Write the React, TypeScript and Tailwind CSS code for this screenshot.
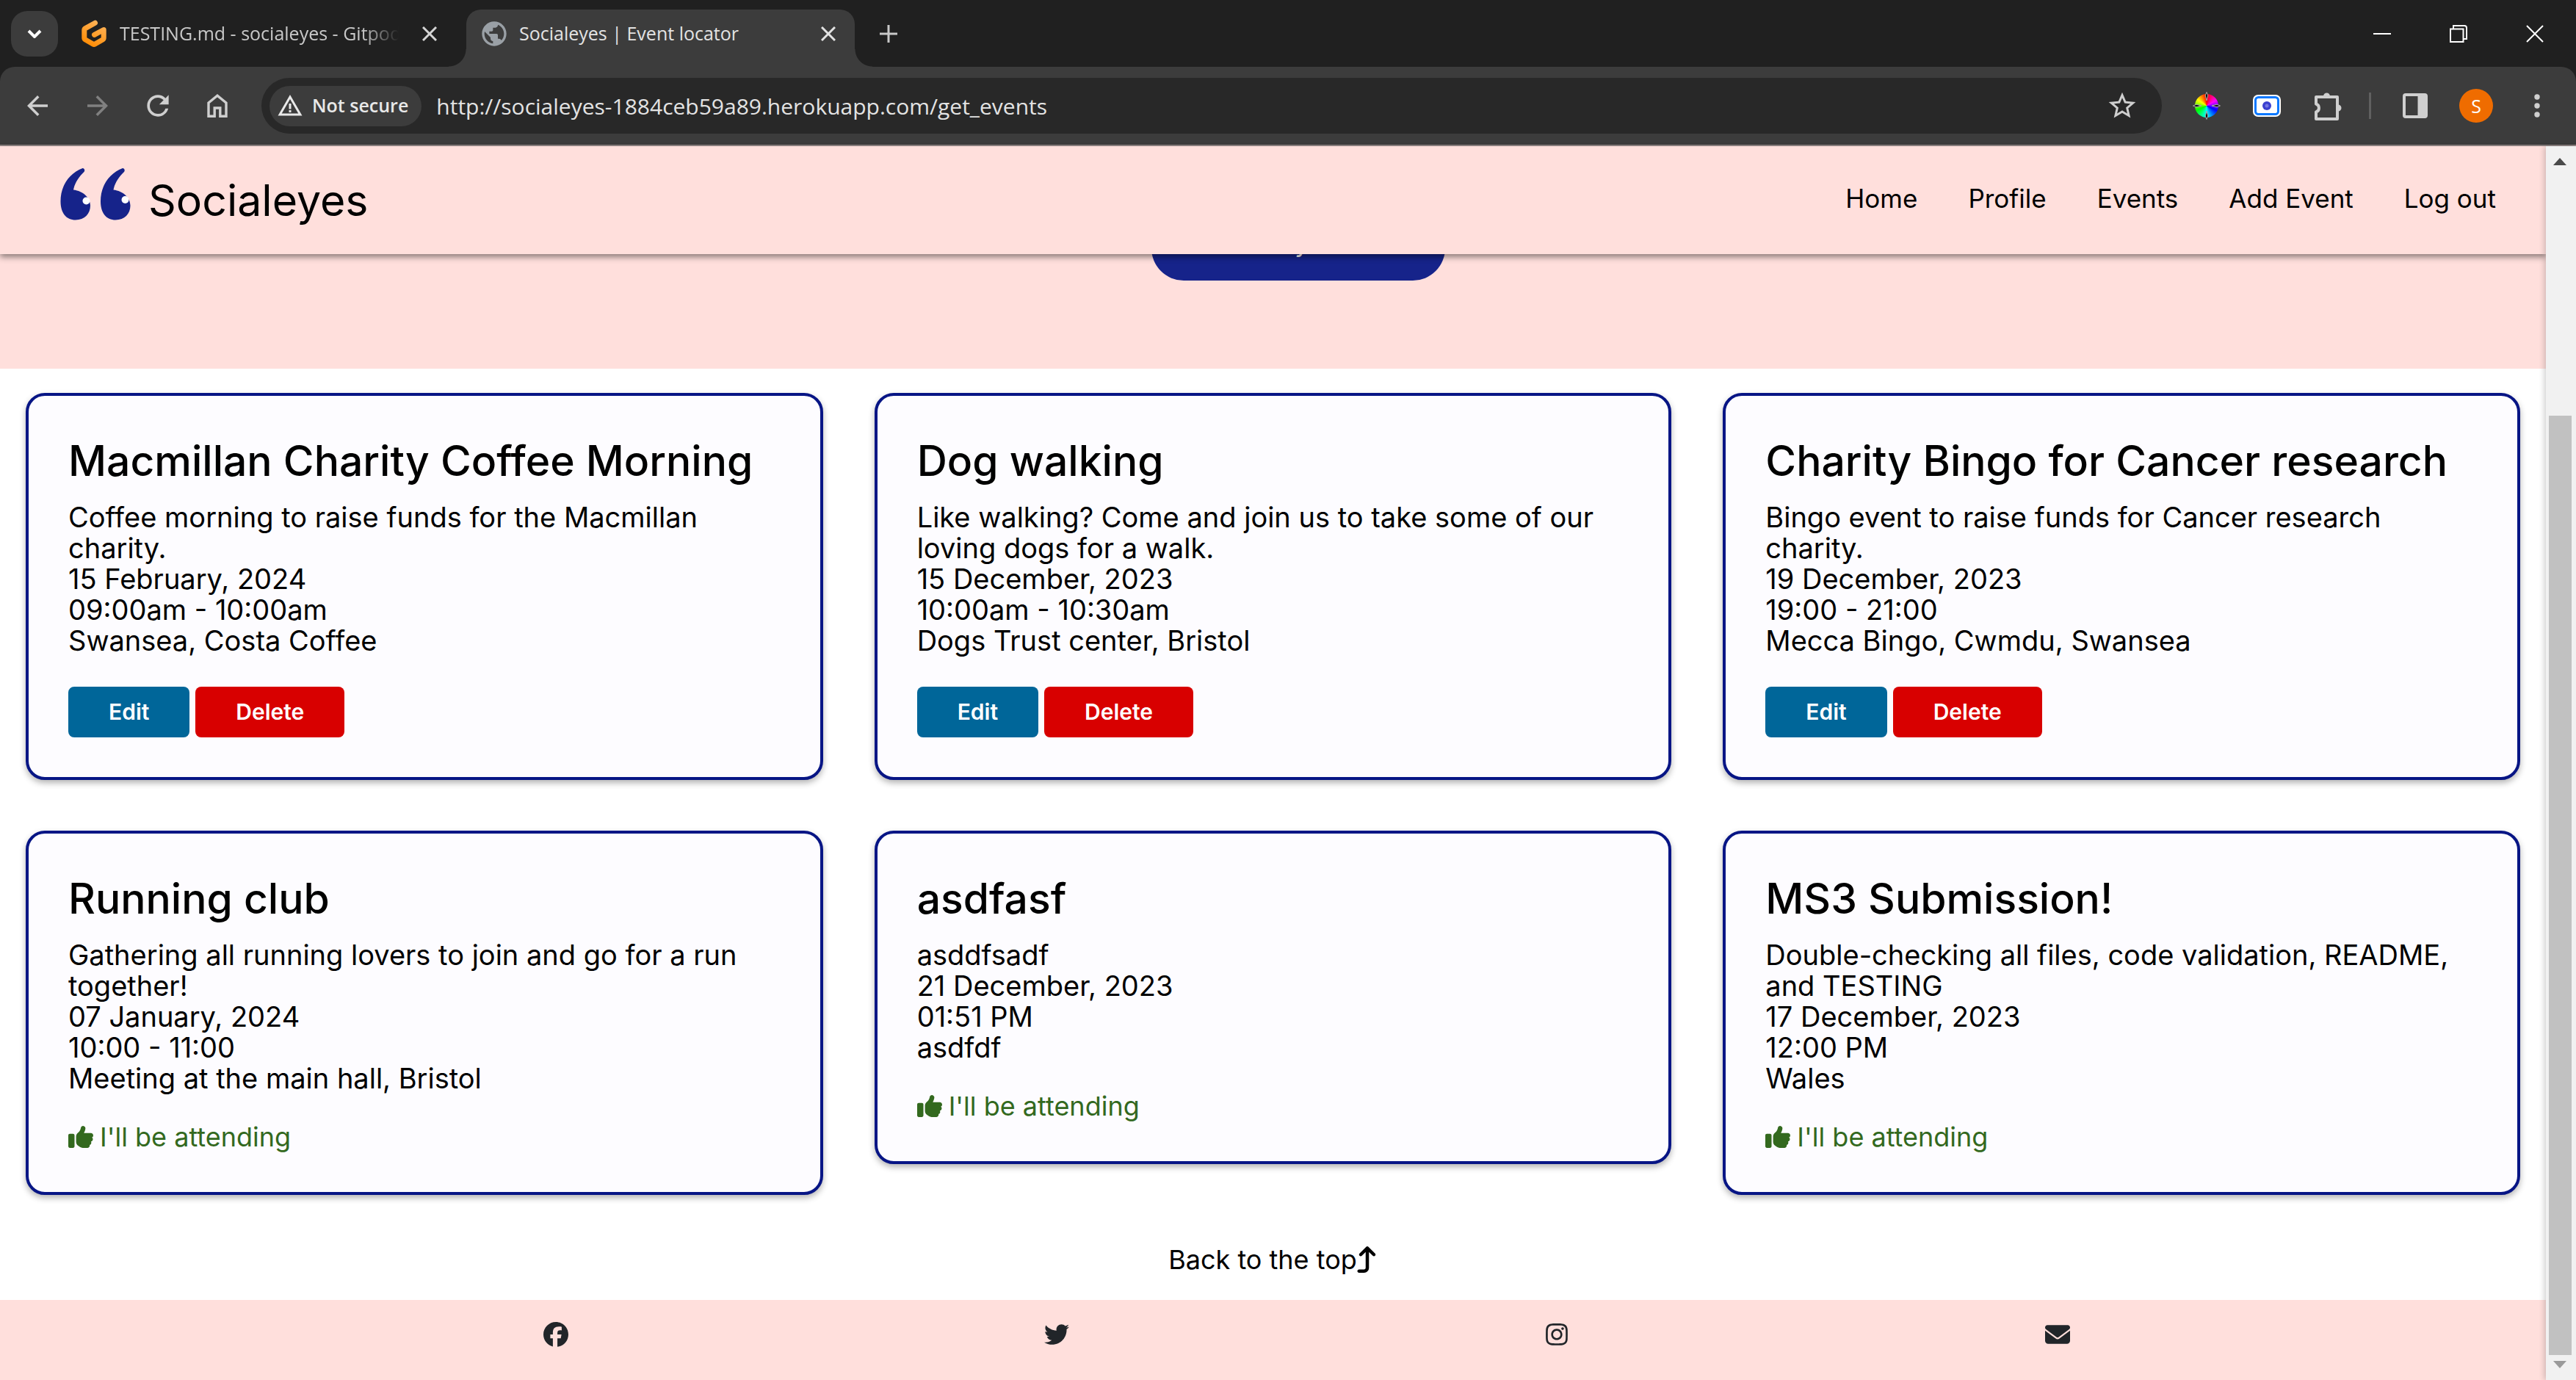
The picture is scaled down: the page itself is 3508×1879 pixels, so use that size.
import type { ReactNode } from "react";
import { FaArrowTurnUp, FaEnvelope, FaFacebook, FaInstagram, FaThumbsUp, FaTwitter } from "react-icons/fa6";
import { MdArrowBack, MdArrowForward, MdPublic, MdRefresh, MdStarBorder, MdWarningAmber } from "react-icons/md";

type EventItem = { title: string; description: string; date: string; time: string; place: string; own: boolean };

const events: EventItem[] = [
  {
    title: "Macmillan Charity Coffee Morning",
    description: "Coffee morning to raise funds for the Macmillan charity.",
    date: "15 February, 2024",
    time: "09:00am - 10:00am",
    place: "Swansea, Costa Coffee",
    own: true,
  },
  {
    title: "Dog walking",
    description: "Like walking? Come and join us to take some of our loving dogs for a walk.",
    date: "15 December, 2023",
    time: "10:00am - 10:30am",
    place: "Dogs Trust center, Bristol",
    own: true,
  },
  {
    title: "Charity Bingo for Cancer research",
    description: "Bingo event to raise funds for Cancer research charity.",
    date: "19 December, 2023",
    time: "19:00 - 21:00",
    place: "Mecca Bingo, Cwmdu, Swansea",
    own: true,
  },
  {
    title: "Running club",
    description: "Gathering all running lovers to join and go for a run together!",
    date: "07 January, 2024",
    time: "10:00 - 11:00",
    place: "Meeting at the main hall, Bristol",
    own: false,
  },
  {
    title: "asdfasf",
    description: "asddfsadf",
    date: "21 December, 2023",
    time: "01:51 PM",
    place: "asdfdf",
    own: false,
  },
  {
    title: "MS3 Submission!",
    description: "Double-checking all files, code validation, README, and TESTING",
    date: "17 December, 2023",
    time: "12:00 PM",
    place: "Wales",
    own: false,
  },
];

const navLinks = ["Home", "Profile", "Events", "Add Event", "Log out"];

function CloseIcon() {
  return (
    <svg className="size-5" viewBox="0 0 20 20" stroke="currentColor" strokeWidth="3" fill="none">
      <path d="M1 1 19 19M19 1 1 19" />
    </svg>
  );
}

function GitpodIcon() {
  return (
    <svg className="h-[38px] w-[34px] shrink-0" viewBox="0 0 34 38" fill="none">
      <defs>
        <linearGradient id="gitpod" x1="26" y1="2" x2="8" y2="36" gradientUnits="userSpaceOnUse">
          <stop stopColor="#ffb45b" />
          <stop offset="1" stopColor="#ff8a00" />
        </linearGradient>
      </defs>
      <path
        d="M18.5 4.2 5.2 11.6Q3.8 12.4 3.8 14v10.6q0 1.6 1.4 2.4l10.4 6q1.4.8 2.8 0l10.4-6q1.4-.8 1.4-2.4V13.5L17.5 20.4"
        stroke="url(#gitpod)"
        strokeWidth="7"
        strokeLinecap="round"
        strokeLinejoin="round"
      />
    </svg>
  );
}

function TabStrip() {
  return (
    <div className="flex h-[91px] items-center bg-[#202020] pl-[15px] text-[25px] text-[#c8c8c8]">
      <button aria-label="Search tabs" className="flex h-[62px] w-16 items-center justify-center rounded-[22px] bg-[#3c3c3c] text-white">
        <svg className="h-3 w-5" viewBox="0 0 20 12" fill="none" stroke="currentColor" strokeWidth="4">
          <path d="m2 2 8 8 8-8" />
        </svg>
      </button>
      <div className="ml-8 flex items-center">
        <GitpodIcon />
        <button className="ml-[18px] w-[384px] overflow-hidden whitespace-nowrap text-left [mask-image:linear-gradient(to_right,black_86%,transparent_99%)]">
          TESTING.md - socialeyes - Gitpod
        </button>
        <button aria-label="Close tab" className="ml-7 text-[#d5d5d5]">
          <CloseIcon />
        </button>
      </div>
      <div className="relative ml-10 flex h-[78px] w-[529px] items-center self-end rounded-t-[20px] bg-[#3c3c3c] pb-3 pl-[18px] pr-[26px] text-[#e3e3e3]">
        <span className="absolute -left-6 bottom-0 size-6 bg-[radial-gradient(circle_at_0_0,#202020_23px,#3c3c3c_24px)]" />
        <span className="absolute -right-6 bottom-0 size-6 bg-[radial-gradient(circle_at_100%_0,#202020_23px,#3c3c3c_24px)]" />
        <MdPublic className="size-10 shrink-0 text-[#9aa0a6]" />
        <button className="ml-3.5 whitespace-nowrap">Socialeyes | Event locator</button>
        <button aria-label="Close tab" className="ml-auto">
          <CloseIcon />
        </button>
      </div>
      <button aria-label="New tab" className="ml-[34px]">
        <svg className="size-6" viewBox="0 0 24 24" stroke="currentColor" strokeWidth="3">
          <path d="M12 0v24M0 12h24" />
        </svg>
      </button>
      <div className="ml-auto flex items-center gap-20 pr-11 text-white">
        <button aria-label="Minimize">
          <svg className="size-6" viewBox="0 0 24 24" stroke="currentColor" strokeWidth="2">
            <path d="M0 12h24" />
          </svg>
        </button>
        <button aria-label="Restore">
          <svg className="size-6" viewBox="0 0 24 24" fill="none" stroke="currentColor" strokeWidth="2">
            <path d="M1 5.5h17.5V23H1zM5 5V1h15q3 0 3 3v15h-4" />
          </svg>
        </button>
        <button aria-label="Close window">
          <svg className="size-6" viewBox="0 0 24 24" stroke="currentColor" strokeWidth="2">
            <path d="m1 1 22 22M23 1 1 23" />
          </svg>
        </button>
      </div>
    </div>
  );
}

function Toolbar() {
  return (
    <div className="bg-[#202020]">
      <div className="flex h-[108px] items-center rounded-t-[20px] border-b-2 border-[#8f8584] bg-[#3c3c3c] pl-[30px] pr-[49px] text-[#cfcfcf]">
        <button aria-label="Back">
          <MdArrowBack className="size-[42px]" />
        </button>
        <button aria-label="Forward" className="ml-10 text-[#808080]">
          <MdArrowForward className="size-[42px]" />
        </button>
        <button aria-label="Reload" className="ml-[39px]">
          <MdRefresh className="size-11" />
        </button>
        <button aria-label="Home page" className="ml-[45px]">
          <svg className="h-8 w-7" viewBox="0 0 28 32" fill="none" stroke="currentColor" strokeWidth="3.4">
            <path d="M2 30.3V12L14 2.2 26 12v18.3h-8.2V19h-7.6v11.3z" />
          </svg>
        </button>
        <div className="ml-[46px] flex h-[76px] flex-1 items-center rounded-full bg-[#282828] pl-[11px] pr-8">
          <button className="flex h-[55px] items-center gap-3 rounded-full bg-[#3c3c3c] pl-[10px] pr-[18px] text-[25px] font-semibold text-[#e8e8e8]">
            <MdWarningAmber className="size-9" />
            Not secure
          </button>
          <input
            aria-label="Address"
            className="ml-5 min-w-0 flex-1 bg-transparent text-[30px] text-[#e3e3e3] outline-none"
            defaultValue="http://socialeyes-1884ceb59a89.herokuapp.com/get_events"
          />
          <button aria-label="Bookmark this tab">
            <MdStarBorder className="size-11" />
          </button>
        </div>
        <button aria-label="Color picker extension" className="ml-[42px]">
          <span className="relative block size-[38px]">
            <span className="absolute inset-[3px] rounded-full bg-[conic-gradient(red,magenta_60deg,blue_115deg,cyan_180deg,lime_245deg,yellow_305deg,red)]" />
            <svg className="absolute inset-0 size-full" viewBox="0 0 38 38" fill="#111" stroke="#aaa" strokeWidth="1">
              <path d="m19 .5 1.8 4.5L19 12l-1.8-7zM19 37.5l1.8-4.5L19 26l-1.8 7zM.5 19l4.5-1.8L12 19l-7 1.8zM37.5 19l-4.5-1.8L26 19l7 1.8z" />
            </svg>
          </span>
        </button>
        <button aria-label="Screenshot extension" className="ml-11">
          <svg className="h-[30px] w-[38px]" viewBox="0 0 38 30">
            <rect width="38" height="30" rx="7" fill="#fff" />
            <rect x="3.5" y="3.5" width="31" height="23" rx="4" fill="#fff" stroke="#0a78ff" strokeWidth="3" />
            <circle cx="19" cy="15" r="6" fill="#3b3fd0" />
            <circle cx="19" cy="15" r="2.5" fill="#7476e2" />
          </svg>
        </button>
        <button aria-label="Extensions" className="ml-[45px]">
          <svg className="size-[39px]" viewBox="0 0 39 39" fill="none" stroke="currentColor" strokeWidth="4" strokeLinejoin="round">
            <path d="M3 7h29v30H3v-9.5a5.8 5.8 0 0 0 0-11z" />
            <path d="M14 6a3.5 3.5 0 0 1 7 0zM33 18.5a3.5 3.5 0 0 1 0 7z" fill="currentColor" strokeWidth="2" />
          </svg>
        </button>
        <span className="ml-9 h-9 w-[3px] bg-[#606060]" />
        <button aria-label="Side panel" className="ml-[43px]">
          <svg className="size-[34px]" viewBox="0 0 34 34" fill="none">
            <rect x="2" y="2" width="30" height="30" rx="2" stroke="currentColor" strokeWidth="4" />
            <path d="M20.5 2H32v30H20.5z" fill="currentColor" />
          </svg>
        </button>
        <button aria-label="Profile" className="ml-[43px] size-[46px] rounded-full bg-[#ef6c00] text-[25px] leading-none text-white">
          S
        </button>
        <button aria-label="Menu" className="ml-14">
          <svg className="h-8 w-2" viewBox="0 0 8 32" fill="currentColor">
            <circle cx="4" cy="4" r="3.7" />
            <circle cx="4" cy="16" r="3.7" />
            <circle cx="4" cy="28" r="3.7" />
          </svg>
        </button>
      </div>
    </div>
  );
}

function LogoMark() {
  const quote =
    "M30.5 0C33 0 34 3 32.5 5 25 12 19.5 21 18 29.5 31 31 41 40 41 51 41 62 33 70.5 21 70.5 8 70.5 .5 61 .5 45 .5 24 12 7 30.5 0Z";
  return (
    <svg className="mb-4 h-[71px] w-24" viewBox="0 0 96 71">
      <g fill="#16238a">
        <path d={quote} />
        <path d={quote} transform="translate(54.5)" />
      </g>
      <circle cx="35.5" cy="44.5" r="5" fill="#fff" />
      <circle cx="88.5" cy="43" r="5" fill="#fff" />
    </svg>
  );
}

function SiteHeader() {
  return (
    <header className="relative z-10 flex h-[147px] items-center justify-between bg-[#ffdfdc] pl-[82px] pr-[68px] shadow-[0_4px_8px_rgba(0,0,0,0.45)]">
      <a href="#home" className="flex items-center gap-6 text-[59px] leading-none">
        <LogoMark />
        Socialeyes
      </a>
      <nav className="flex gap-[69px] pb-1 text-[35px]">
        {navLinks.map((label) => (
          <a key={label} href={`#${label}`}>
            {label}
          </a>
        ))}
      </nav>
    </header>
  );
}

function ActionButton({ className, children }: { className: string; children: ReactNode }) {
  return <button className={`h-[69px] rounded-lg px-[55px] text-[30px] font-semibold text-white ${className}`}>{children}</button>;
}

function EventCard({ event }: { event: EventItem }) {
  return (
    <article className="rounded-[26px] border-4 border-[#071585] bg-[#fdfcff] p-[54px] shadow-[0_4px_8px_rgba(0,0,0,0.3)]">
      <h2 className="whitespace-nowrap text-[57px] font-medium leading-[70px]">{event.title}</h2>
      <div className="mt-5 text-[38px] leading-[42px]">
        <p>{event.description}</p>
        <p>{event.date}</p>
        <p>{event.time}</p>
        <p>{event.place}</p>
      </div>
      {event.own ? (
        <div className="mt-[42px] flex gap-2">
          <ActionButton className="bg-[#006699]">Edit</ActionButton>
          <ActionButton className="bg-[#d80000]">Delete</ActionButton>
        </div>
      ) : (
        <button className="mt-[38px] flex items-center gap-[9px] text-[36px] leading-[42px] text-[#33691e]">
          <FaThumbsUp className="size-[34px]" />
          I'll be attending
        </button>
      )}
    </article>
  );
}

function Scrollbar() {
  return (
    <div className="relative z-20 flex w-[41px] shrink-0 flex-col items-center bg-[#f1f1f1] py-4 pr-[3px] shadow-[-2px_0_8px_rgba(0,0,0,0.2)]">
      <svg className="h-2.5 w-[18px]" viewBox="0 0 18 10" fill="#4a4a4a">
        <path d="M9 0 18 10H0z" />
      </svg>
      <div className="grow-[341]" />
      <div className="w-[31px] grow-[1279] bg-[#c1c1c1]" />
      <svg className="mt-2 h-2.5 w-[18px]" viewBox="0 0 18 10" fill="#9a9a9a">
        <path d="M9 10 0 0h18z" />
      </svg>
    </div>
  );
}

export default function App() {
  return (
    <div className="flex min-h-screen flex-col bg-white">
      <div className="font-['Open_Sans',sans-serif]">
        <TabStrip />
        <Toolbar />
      </div>
      <div className="flex flex-1 font-['Inter',sans-serif] text-black">
        <div className="flex min-w-0 flex-1 flex-col">
          <SiteHeader />
          <section className="flex h-[156px] items-start justify-center overflow-hidden bg-[#ffdfdc] pl-[69px]">
            <button className="-mt-16 h-[100px] w-[400px] rounded-[44px] bg-[#16238a] pb-1 text-[34px] text-white">Go to my events</button>
          </section>
          <main>
            <div className="grid grid-cols-3 items-start gap-x-[70px] gap-y-[69px] px-[35px] pt-[33px]">
              {events.map((event) => (
                <EventCard key={event.title} event={event} />
              ))}
            </div>
            <div className="flex justify-center pb-7 pt-[61px]">
              <a href="#top" className="flex items-center text-[36px] leading-[54px]">
                Back to the top
                <FaArrowTurnUp className="h-9 w-7" />
              </a>
            </div>
          </main>
          <footer className="flex flex-1 items-start justify-evenly bg-[#ffdfdc] pb-[45px] pl-[92px] pt-[30px] text-[34px] text-[#212529]">
            <a href="#facebook" aria-label="Facebook">
              <FaFacebook />
            </a>
            <a href="#twitter" aria-label="Twitter">
              <FaTwitter />
            </a>
            <a href="#instagram" aria-label="Instagram">
              <FaInstagram />
            </a>
            <a href="#email" aria-label="Email">
              <FaEnvelope />
            </a>
          </footer>
        </div>
        <Scrollbar />
      </div>
    </div>
  );
}
